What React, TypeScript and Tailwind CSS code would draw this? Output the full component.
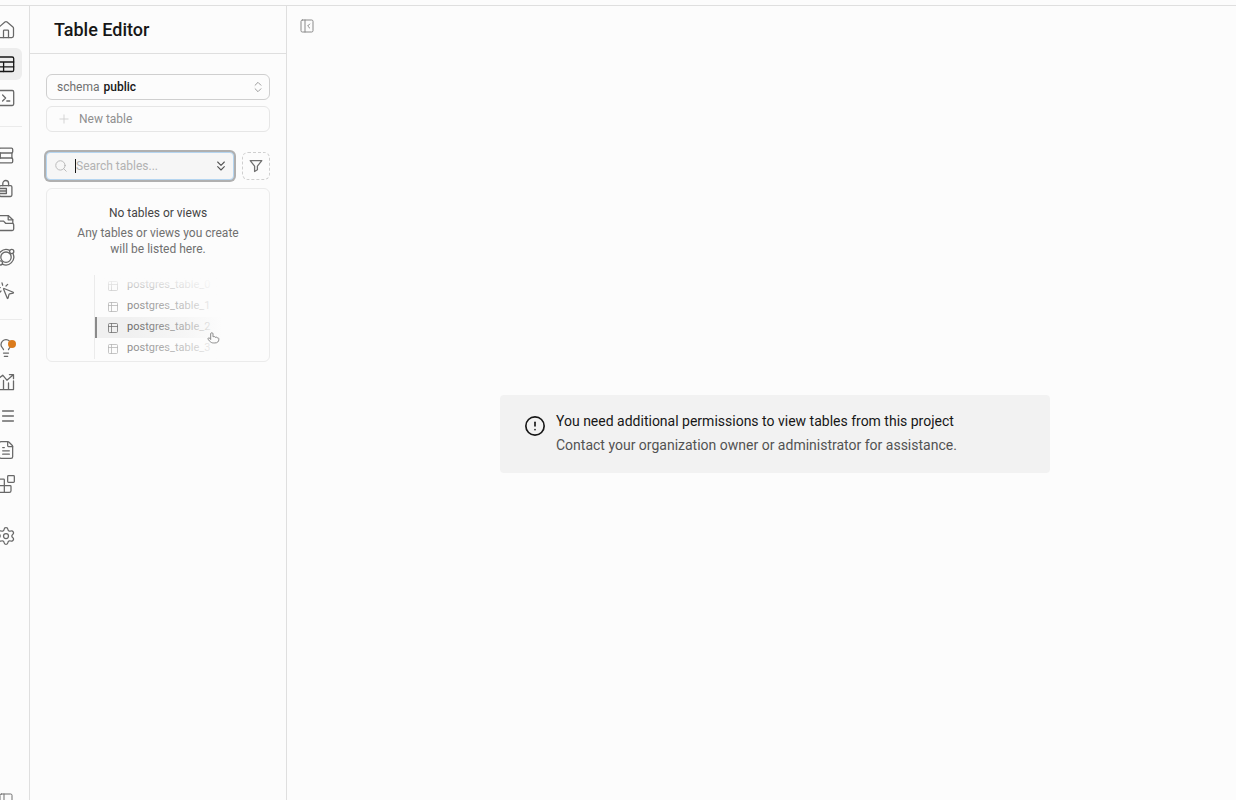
import type { ReactNode } from "react";
import {
  Blocks,
  ChevronsDown,
  ChevronsUpDown,
  CircleAlert,
  FileText,
  House,
  Lightbulb,
  MousePointerClick,
  PanelLeft,
  PanelLeftClose,
  Plus,
  Search,
  Settings,
  Table2,
} from "lucide-react";

function Glyph({ children }: { children: ReactNode }) {
  return (
    <svg
      width="20"
      height="20"
      viewBox="0 0 20 20"
      fill="none"
      stroke="currentColor"
      strokeWidth="1.3"
      strokeLinecap="round"
      strokeLinejoin="round"
      aria-hidden="true"
    >
      {children}
    </svg>
  );
}

const TableGlyph = () => (
  <Glyph>
    <rect x="2.5" y="3" width="15.2" height="14.5" rx="1.6" />
    <path d="M2.5 8h15.2M2.5 12.8h15.2M7.6 8v9.5" />
  </Glyph>
);
const SqlGlyph = () => (
  <Glyph>
    <rect x="2.3" y="2.5" width="15.4" height="15" rx="1.4" />
    <path d="M6.6 7l3 3-3 3M10.8 13h3" />
  </Glyph>
);
const DatabaseGlyph = () => (
  <Glyph>
    <rect x="3.3" y="3.2" width="13.4" height="4.8" rx="1.2" />
    <path d="M4.3 8v5M15.9 8v5" />
    <rect x="3.3" y="13" width="13.4" height="4.8" rx="1.2" />
  </Glyph>
);
const AuthGlyph = () => (
  <Glyph>
    <path d="M6.8 6.7V4.4a2.9 2.9 0 0 1 5.8 0v2.3" />
    <rect x="3.4" y="6.7" width="12.5" height="10.8" rx="1.4" />
    <path d="M3.4 9.5h7v5h-7M3.4 12h7" />
  </Glyph>
);
const StorageGlyph = () => (
  <Glyph>
    <path d="M2.4 8V3.8a1.2 1.2 0 0 1 1.2-1.2h8.600l4.600 4.200v3.400" />
    <path d="M12.2 2.6v4.2h4.6" />
    <path d="M2.4 8.1h5.200l2 2.200h6.600a1.500 1.500 0 0 1 1.500 1.500v4.200a1.500 1.500 0 0 1-1.500 1.500H3.900a1.500 1.500 0 0 1-1.500-1.500z" />
  </Glyph>
);
const FunctionsGlyph = () => (
  <Glyph>
    <circle cx="10" cy="10.2" r="5.2" />
    <path d="M13.7 3.3A7.9 7.9 0 0 0 3.1 13.9M6.3 17.1A7.9 7.9 0 0 0 16.9 6.5" />
    <circle cx="15.7" cy="4.5" r="2.1" />
    <circle cx="4.4" cy="15.9" r="2.1" />
  </Glyph>
);
const ReportsGlyph = () => (
  <Glyph>
    <path d="M2.5 6.5l4.2-3.3 4.2 5 6.4-5.4M13.4 2.6h4.1v4.1" />
    <path d="M2.5 17.6h15M2.5 10.5v7M7.5 8.5v9M12.5 11v6.6M17.5 9v8.6" />
  </Glyph>
);
const LogsGlyph = () => (
  <Glyph>
    <path d="M6.6 5h10.8M6.6 10h10.8M6.6 15h10.8M2.6 5h.01M2.6 10h.01M2.6 15h.01" />
  </Glyph>
);

const lucide = { size: 20, strokeWidth: 1.5, "aria-hidden": true } as const;

type Item = { label: string; icon: ReactNode; active?: boolean; dot?: boolean };

const groups: Item[][] = [
  [
    { label: "Project overview", icon: <House {...lucide} /> },
    { label: "Table Editor", icon: <TableGlyph />, active: true },
    { label: "SQL Editor", icon: <SqlGlyph /> },
  ],
  [
    { label: "Database", icon: <DatabaseGlyph /> },
    { label: "Authentication", icon: <AuthGlyph /> },
    { label: "Storage", icon: <StorageGlyph /> },
    { label: "Edge Functions", icon: <FunctionsGlyph /> },
    { label: "Realtime", icon: <MousePointerClick {...lucide} /> },
  ],
  [
    { label: "Advisors", icon: <Lightbulb {...lucide} />, dot: true },
    { label: "Reports", icon: <ReportsGlyph /> },
    { label: "Logs", icon: <LogsGlyph /> },
    { label: "API Docs", icon: <FileText {...lucide} /> },
    { label: "Integrations", icon: <Blocks {...lucide} /> },
  ],
];

function RailLink({ label, icon, active, dot }: Item) {
  return (
    <a
      href="#"
      aria-label={label}
      className={
        active
          ? "relative flex size-8 shrink-0 items-center justify-center rounded-md bg-[#ededed] text-[#171717]"
          : "relative flex size-8 shrink-0 items-center justify-center rounded-md text-[#686868]"
      }
    >
      {icon}
      {dot && <span className="absolute top-2 right-1.5 size-2 rounded-full bg-[#db7b1c]" />}
    </a>
  );
}

function Rail() {
  return (
    <nav aria-label="Project" className="flex w-[30px] shrink-0 justify-end overflow-hidden border-r border-[#dfdfdf] pr-[7px]">
      <div className="flex w-8 shrink-0 flex-col pt-2">
        {groups.map((items, i) => (
          <div
            key={i}
            className={i === 0 ? "flex flex-col gap-0.5" : "mt-3 flex flex-col gap-0.5 border-t border-[#ebebeb] pt-3"}
          >
            {items.map((item) => (
              <RailLink key={item.label} {...item} />
            ))}
          </div>
        ))}
        <div className="mt-5">
          <RailLink label="Project Settings" icon={<Settings {...lucide} />} />
        </div>
        <button type="button" aria-label="Expand sidebar" className="mt-auto -mb-4 flex size-8 shrink-0 items-center justify-center text-[#707070]">
          <PanelLeft size={16} strokeWidth={1.5} />
        </button>
      </div>
    </nav>
  );
}

const sampleTables = ["postgres_table_0", "postgres_table_1", "postgres_table_2", "postgres_table_3"];

function EmptyTables() {
  return (
    <section className="mt-2 overflow-hidden rounded-md border border-[#ebebeb] pt-4 pb-0.5">
      <h2 className="text-center text-[12px] leading-4 text-[#444444]">No tables or views</h2>
      <p className="mx-auto mt-1 w-[180px] text-center text-[12px] leading-4 text-[#707070]">
        Any tables or views you create will be listed here.
      </p>
      <div className="relative mt-[18px] ml-[47px] w-32 border-l border-[#ebebeb]">
        <ul>
          {sampleTables.map((name, i) => (
            <li
              key={name}
              className={
                i === 2
                  ? "flex h-[21px] items-center border-l-2 border-[#8a8a8a] bg-[#f0f0f0] pl-2.5 text-[11px] text-[#666666]"
                  : "flex h-[21px] items-center pl-3 text-[11px] text-[#8a8a8a]"
              }
            >
              <Table2 size={12} strokeWidth={1.6} className={i === 2 ? "opacity-90" : "opacity-60"} />
              <span className="ml-2">{name}</span>
            </li>
          ))}
        </ul>
        <div className="absolute inset-y-0 right-0 left-8 bg-linear-to-r from-[#fcfcfc]/0 via-[#fcfcfc]/50 via-60% to-[#fcfcfc]" />
        <div className="absolute inset-x-0 top-0 h-6 bg-linear-to-b from-[#fcfcfc] to-[#fcfcfc]/0" />
        <svg
          className="absolute top-14 right-0.5 text-[#8a8a8a]"
          width="14"
          height="14"
          viewBox="0 0 24 24"
          fill="#fcfcfc"
          stroke="currentColor"
          strokeWidth="1.7"
          strokeLinecap="round"
          strokeLinejoin="round"
          aria-hidden="true"
        >
          <path d="M8 14V5a2 2 0 0 1 4 0v5c2-1 4-.5 4 1 2-.8 3.5-.3 3.5 1 2-.4 2.500.300 2.500 2 0 4.500-2.500 6.500-7 6.500h-2c-3 0-4.500-1-6-2.600L3.500 14.500a1.800 1.800 0 0 1 2.600-2.400z" />
        </svg>
      </div>
    </section>
  );
}

function TablePanel() {
  return (
    <aside className="flex w-[257px] shrink-0 flex-col border-r border-[#dfdfdf]">
      <header className="flex h-12 shrink-0 items-center border-b border-[#dfdfdf] px-6">
        <h1 className="text-[18px] leading-6 font-medium text-[#171717]">Table Editor</h1>
      </header>
      <div className="flex flex-col px-4 pt-5">
        <button type="button" className="flex h-[26px] items-center rounded-md border border-[#cfcfcf] pr-1 pl-2.5 text-[12px] leading-4">
          <span className="text-[#707070]">schema</span>
          <span className="ml-1 font-medium text-[#171717]">public</span>
          <ChevronsUpDown size={14} strokeWidth={1.5} className="ml-auto text-[#8f8f8f]" />
        </button>
        <button type="button" disabled className="mt-1.5 flex h-[26px] items-center rounded-md border border-[#e6e6e6] px-2.5 text-[12px] leading-4 text-[#8f8f8f]">
          <Plus size={14} strokeWidth={1.5} className="text-[#cfcfcf]" />
          <span className="ml-2">New table</span>
        </button>
        <div className="mt-5 flex gap-2">
          <div className="flex h-7 min-w-0 flex-1 items-center rounded-sm border border-[#b5d5f0] bg-[#f6f6f6] pr-1 pl-[7px] ring-2 ring-[#b0b0b0]">
            <Search size={14} strokeWidth={1.5} className="shrink-0 text-[#b2b2b2]" />
            <span className="ml-[7px] h-3.5 w-px shrink-0 bg-[#171717]" />
            <input
              type="text"
              aria-label="Search tables"
              placeholder="Search tables..."
              className="min-w-0 flex-1 bg-transparent text-[12px] leading-4 outline-none placeholder:text-[#b2b2b2]"
            />
            <button type="button" aria-label="Sort tables" className="shrink-0 text-[#525252]">
              <ChevronsDown size={16} strokeWidth={1.6} />
            </button>
          </div>
          <button
            type="button"
            aria-label="Filter"
            className="flex size-7 shrink-0 items-center justify-center rounded-md border border-dashed border-[#cfcfcf] text-[#707070]"
          >
            <svg width="14" height="14" viewBox="0 0 14 14" fill="none" stroke="currentColor" strokeWidth="1.3" strokeLinejoin="round" aria-hidden="true">
              <path d="M1.2 1.7h11.6L8.4 7.2v3.6L5.6 12.5V7.2z" />
            </svg>
          </button>
        </div>
        <EmptyTables />
      </div>
    </aside>
  );
}

export default function App() {
  return (
    <div className="flex h-screen flex-col overflow-hidden bg-[#fcfcfc] pt-[5px] font-['Roboto','Liberation_Sans',sans-serif] text-[#171717]">
      <div className="flex min-h-0 flex-1 border-t border-[#dfdfdf]">
        <Rail />
        <TablePanel />
        <main className="flex min-w-0 flex-1 flex-col">
          <div className="flex h-10 shrink-0 items-center px-3">
            <button type="button" aria-label="Collapse panel" className="text-[#8a8a8a]">
              <PanelLeftClose size={16} strokeWidth={1.5} />
            </button>
          </div>
          <div className="flex flex-1 items-center justify-center pt-[22px] pl-[27px]">
            <div role="alert" className="flex w-[550px] rounded-sm bg-[#f2f2f2] px-6 pt-3.5 pb-4">
              <CircleAlert size={22} strokeWidth={1.8} className="mt-1.5 shrink-0" />
              <div className="ml-2.5 text-[14px] leading-6">
                <p>You need additional permissions to view tables from this project</p>
                <p className="text-[#525252]">Contact your organization owner or administrator for assistance.</p>
              </div>
            </div>
          </div>
        </main>
      </div>
    </div>
  );
}
